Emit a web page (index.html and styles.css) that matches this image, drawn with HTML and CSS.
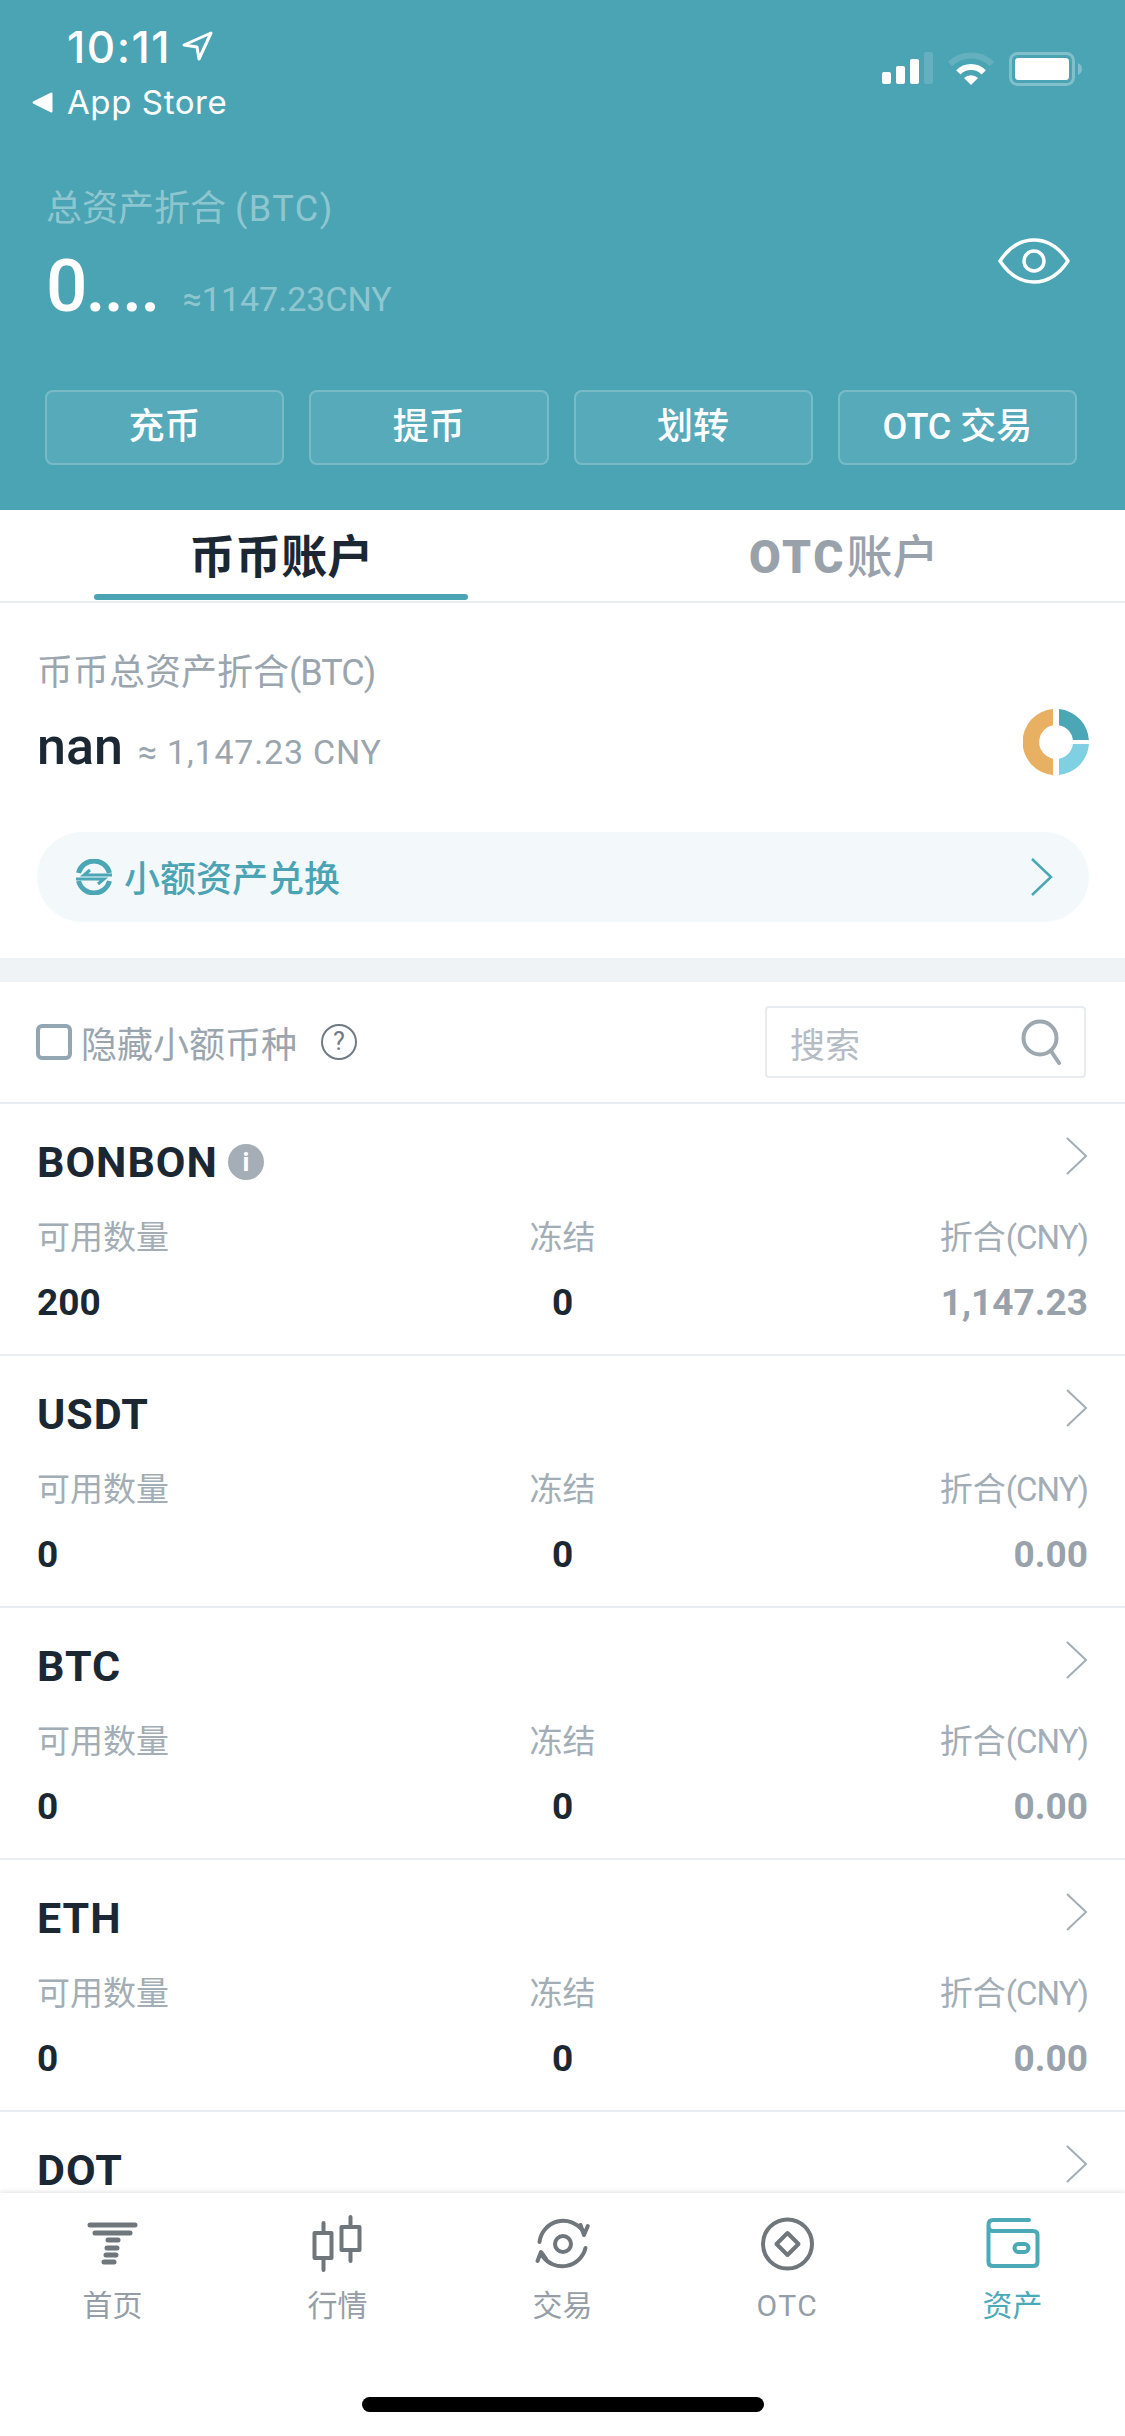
FILE: index.html
```html
<!DOCTYPE html>
<html lang="zh-CN">
<head>
	<meta charset="utf-8" />
	<title>资产</title>
	<link rel="stylesheet" href="styles.css">
</head>
<body>
<div class="phone">
	<header class="top">
		<div class="status">
			<div class="status-left">
				<div class="time-row">
					<span class="time">10:11</span>
					<svg class="loc" width="32" height="32" viewBox="0 0 32 32"><path d="M29 2 L2 14 L15 16 L17 28 Z" fill="none" stroke="#fff" stroke-width="3" stroke-linejoin="round"/></svg>
				</div>
				<div class="back-row">
					<svg class="back" width="21" height="21" viewBox="0 0 21 21"><path d="M19.5 1.5 V19.5 L1.5 10.5 Z" fill="#fff" stroke="#fff" stroke-width="2" stroke-linejoin="round"/></svg>
					<span class="back-text">App Store</span>
				</div>
			</div>
			<div class="status-right">
				<svg width="51" height="33" viewBox="0 0 51 33">
					<rect x="0" y="20" width="9" height="12" rx="2" fill="#fff"/>
					<rect x="14" y="14" width="9" height="18" rx="2" fill="#fff"/>
					<rect x="28" y="7" width="9" height="25" rx="2" fill="#fff"/>
					<rect x="42" y="0" width="9" height="32" rx="2" fill="#fff" opacity=".14"/>
				</svg>
				<svg width="46" height="34" viewBox="0 0 46 34" fill="none">
					<path d="M2 12 A30 30 0 0 1 44 12" stroke="#fff" stroke-width="6" opacity=".14"/>
					<path d="M10.3 20.3 A18 18 0 0 1 35.7 20.3" stroke="#fff" stroke-width="6"/>
					<path d="M23 33 L16 26 A10 10 0 0 1 30 26 Z" fill="#fff"/>
				</svg>
				<svg width="73" height="34" viewBox="0 0 73 34" fill="none">
					<rect x="1.5" y="1.5" width="63" height="31" rx="7" stroke="#fff" stroke-width="3" opacity=".3"/>
					<rect x="6" y="6" width="54" height="22" rx="3.5" fill="#fff"/>
					<path d="M69 11 Q73 13 73 17 Q73 21 69 23 Z" fill="#fff" opacity=".3"/>
				</svg>
			</div>
		</div>

		<div class="balance">
			<div>
				<div class="balance-label">总资产折合 <span class="wide">(BTC)</span></div>
				<div class="balance-value"><span class="big">0....</span><span class="approx">≈1147.23CNY</span></div>
			</div>
			<svg class="eye" width="72" height="46" viewBox="0 0 72 46" fill="none" stroke="#fff" stroke-width="3.5">
				<path d="M2 23 C12 8 24 2 36 2 C48 2 60 8 70 23 C60 38 48 44 36 44 C24 44 12 38 2 23 Z" stroke-linejoin="round"/>
				<circle cx="36" cy="23" r="10"/>
			</svg>
		</div>

		<div class="actions">
			<div class="action">充币</div>
			<div class="action">提币</div>
			<div class="action">划转</div>
			<div class="action">OTC 交易</div>
		</div>
	</header>

	<nav class="tabs">
		<div class="tab active"><span class="tab-label">币币账户</span></div>
		<div class="tab"><span class="tab-label"><b>OTC</b>账户</span></div>
	</nav>

	<section class="summary">
		<div class="summary-label">币币总资产折合<span class="tight">(BTC)</span></div>
		<div class="summary-row">
			<div class="summary-value"><span class="nan">nan</span><span class="cny">≈ 1,147.23 CNY</span></div>
			<svg width="66" height="66" viewBox="0 0 66 66">
				<path d="M30 .1 A33 33 0 0 0 30 65.9 V49.7 A17 17 0 0 1 30 16.3 Z" fill="#e8b062"/>
				<path d="M36 .1 A33 33 0 0 1 65.9 31 H49.9 A17 17 0 0 0 36 16.3 Z" fill="#4ba6b6"/>
				<path d="M65.9 35 A33 33 0 0 1 36 65.9 V49.7 A17 17 0 0 0 49.9 35 Z" fill="#7fd0e2"/>
			</svg>
		</div>
		<div class="pill">
			<svg width="36" height="36" viewBox="0 0 36 36" fill="none" stroke="#4ba6b6" stroke-width="5">
				<path d="M2.5 14 A16 16 0 0 1 33.5 14"/>
				<path d="M2.5 22 A16 16 0 0 0 33.5 22"/>
				<path d="M14 11 L8 16 H36" stroke-width="3"/>
				<path d="M0 20 H28 L22 25" stroke-width="3"/>
			</svg>
			<span class="pill-text">小额资产兑换</span>
			<svg class="pill-arrow" width="22" height="38" viewBox="0 0 22 38" fill="none" stroke="#4ba6b6" stroke-width="2.5"><path d="M1 1 L20 19 L1 37"/></svg>
		</div>
	</section>

	<div class="band"></div>

	<section class="filter">
		<span class="check"></span>
		<span class="filter-text">隐藏小额币种</span>
		<span class="help">?</span>
		<div class="search">
			<span class="search-text">搜索</span>
			<svg width="42" height="46" viewBox="0 0 42 46" fill="none" stroke="#9ea8b0" stroke-width="4"><circle cx="19" cy="19" r="16.5"/><path d="M30 32 L38 44" stroke-linecap="round"/></svg>
		</div>
	</section>

	<main class="list">
		<article class="coin">
			<div class="coin-head">
				<div class="coin-name">BONBON<span class="info">i</span></div>
				<svg class="coin-arrow" width="22" height="38" viewBox="0 0 22 38" fill="none" stroke="#a3adb5" stroke-width="2"><path d="M1 1 L20 19 L1 37"/></svg>
			</div>
			<div class="coin-grid labels"><span>可用数量</span><span>冻结</span><span>折合<i>(CNY)</i></span></div>
			<div class="coin-grid values"><span>200</span><span>0</span><span>1,147.23</span></div>
		</article>
		<article class="coin">
			<div class="coin-head">
				<div class="coin-name">USDT</div>
				<svg class="coin-arrow" width="22" height="38" viewBox="0 0 22 38" fill="none" stroke="#a3adb5" stroke-width="2"><path d="M1 1 L20 19 L1 37"/></svg>
			</div>
			<div class="coin-grid labels"><span>可用数量</span><span>冻结</span><span>折合<i>(CNY)</i></span></div>
			<div class="coin-grid values"><span>0</span><span>0</span><span>0.00</span></div>
		</article>
		<article class="coin">
			<div class="coin-head">
				<div class="coin-name">BTC</div>
				<svg class="coin-arrow" width="22" height="38" viewBox="0 0 22 38" fill="none" stroke="#a3adb5" stroke-width="2"><path d="M1 1 L20 19 L1 37"/></svg>
			</div>
			<div class="coin-grid labels"><span>可用数量</span><span>冻结</span><span>折合<i>(CNY)</i></span></div>
			<div class="coin-grid values"><span>0</span><span>0</span><span>0.00</span></div>
		</article>
		<article class="coin">
			<div class="coin-head">
				<div class="coin-name">ETH</div>
				<svg class="coin-arrow" width="22" height="38" viewBox="0 0 22 38" fill="none" stroke="#a3adb5" stroke-width="2"><path d="M1 1 L20 19 L1 37"/></svg>
			</div>
			<div class="coin-grid labels"><span>可用数量</span><span>冻结</span><span>折合<i>(CNY)</i></span></div>
			<div class="coin-grid values"><span>0</span><span>0</span><span>0.00</span></div>
		</article>
		<article class="coin">
			<div class="coin-head">
				<div class="coin-name">DOT</div>
				<svg class="coin-arrow" width="22" height="38" viewBox="0 0 22 38" fill="none" stroke="#a3adb5" stroke-width="2"><path d="M1 1 L20 19 L1 37"/></svg>
			</div>
		</article>
	</main>

	<footer class="tabbar">
		<div class="bar-items">
			<div class="bar-item">
				<svg width="60" height="60" viewBox="0 0 60 60" fill="none" stroke="#6f767c" stroke-width="5" stroke-linecap="round">
					<path d="M7 10 H52 M12 18 H47"/>
					<path d="M25 25 H35 M24 33 H34 M23 40 H33 M21 47 H31"/>
				</svg>
				<span>首页</span>
			</div>
			<div class="bar-item">
				<svg width="60" height="60" viewBox="0 0 60 60" fill="none" stroke="#6f767c" stroke-width="4" stroke-linecap="round" stroke-linejoin="round">
					<rect x="6.5" y="18" width="17" height="25"/>
					<path d="M15.5 8 V18 M15.5 43 V55"/>
					<rect x="33.5" y="12" width="18" height="23"/>
					<path d="M42.5 2 V12 M42.5 35 V46"/>
				</svg>
				<span>行情</span>
			</div>
			<div class="bar-item">
				<svg width="60" height="60" viewBox="0 0 60 60" fill="none" stroke="#6f767c" stroke-width="4" stroke-linecap="round" stroke-linejoin="round">
					<circle cx="30" cy="29" r="8"/>
					<path d="M6.5 27 A24 24 0 0 1 50 16"/>
					<path d="M47.5 10 L51 20 L54.8 11"/>
					<path d="M52.5 33 A24 24 0 0 1 9.5 41"/>
					<path d="M4.5 46 L8 37 L13 44"/>
				</svg>
				<span>交易</span>
			</div>
			<div class="bar-item">
				<svg width="60" height="60" viewBox="0 0 60 60" fill="none" stroke="#6f767c" stroke-width="4" stroke-linejoin="round">
					<circle cx="29.5" cy="29" r="24.5"/>
					<path d="M29.5 18 L40.5 29 L29.5 40 L18.5 29 Z"/>
				</svg>
				<span class="latin">OTC</span>
			</div>
			<div class="bar-item current">
				<svg width="60" height="60" viewBox="0 0 60 60" fill="none" stroke="#4ba9b8" stroke-width="4" stroke-linecap="round" stroke-linejoin="round">
					<path d="M46 5 H10 Q5.5 5 5.5 10 V47 Q5.5 51 10 51 H50 Q54.5 51 54.5 47 V20 Q54.5 16 50 16 H10 Q5.5 16 5.5 11"/>
					<rect x="31.5" y="29" width="14" height="8" rx="4"/>
				</svg>
				<span>资产</span>
			</div>
		</div>
		<div class="home-bar"></div>
	</footer>
</div>
</body>
</html>
```

FILE: styles.css
```css
* {
	box-sizing: border-box;
}

body {
	margin: 0;
	background-color: #fff;
	font-family: Roboto, "Noto Sans CJK SC", sans-serif;
}

.phone {
	width: 1125px;
	height: 2436px;
	display: flex;
	flex-direction: column;
	overflow: hidden;
	background-color: #fff;
}

.tight {
	letter-spacing: -1px;
}

.wide {
	letter-spacing: 1.5px;
}

/* teal header */
.top {
	flex: none;
	height: 510px;
	background-color: #4ba4b4;
	color: #fff;
}

.status {
	display: flex;
	justify-content: space-between;
	height: 130px;
	padding: 25px 43px 0 32px;
}

.time-row,
.back-row {
	display: flex;
	align-items: center;
	height: 44px;
}

.time-row {
	padding-left: 35px;
}

.time {
	font-family: Inter, sans-serif;
	font-size: 44px;
	font-weight: 500;
	letter-spacing: 1.5px;
	line-height: 44px;
}

.loc {
	margin-left: 11px;
}

.back-row {
	margin-top: 11px;
}

.back-text {
	margin-left: 14px;
	font-family: Inter, sans-serif;
	font-size: 33px;
	letter-spacing: 0.6px;
}

.status-right {
	display: flex;
	gap: 15px;
	align-items: flex-start;
	padding-top: 27px;
}

.balance {
	display: flex;
	justify-content: space-between;
	align-items: center;
	padding: 54px 55px 0 46px;
}

.balance-label {
	height: 50px;
	line-height: 50px;
	font-size: 36px;
	color: rgba(255, 255, 255, 0.4);
}

.balance-value {
	display: flex;
	align-items: baseline;
	height: 80px;
	line-height: 80px;
	margin-top: 12px;
}

.big {
	font-size: 73px;
	font-weight: 500;
	letter-spacing: -2px;
}

.approx {
	margin-left: 24px;
	font-size: 34px;
	color: rgba(255, 255, 255, 0.4);
}

.eye {
	margin-top: 11px;
}

.actions {
	display: flex;
	gap: 25px;
	margin-top: 64px;
	padding: 0 48px 0 45px;
}

.action {
	flex: 1;
	height: 75px;
	line-height: 71px;
	text-align: center;
	font-size: 36px;
	font-weight: 500;
	background-color: rgba(255, 255, 255, 0.07);
	border: 2px solid rgba(255, 255, 255, 0.2);
	border-radius: 8px;
}

/* account tabs */
.tabs {
	flex: none;
	display: flex;
	height: 93px;
	border-bottom: 2px solid #e8edf1;
}

.tab {
	flex: 1;
	display: flex;
	flex-direction: column;
	align-items: center;
	padding-top: 16px;
}

.tab-label {
	height: 62px;
	line-height: 62px;
	font-size: 46px;
	font-weight: 500;
	color: #99a2ab;
}

.tab-label b {
	font-weight: 900;
	letter-spacing: 3px;
}

.tab.active .tab-label {
	color: #1b2833;
	font-weight: 700;
}

.tab.active::after {
	content: "";
	width: 374px;
	height: 6px;
	margin-top: 6px;
	background-color: #4ba4b4;
	border-radius: 3px;
}

/* summary */
.summary {
	flex: none;
	padding: 45px 36px 36px 37px;
}

.summary-label {
	height: 50px;
	line-height: 50px;
	font-size: 36px;
	color: #9aa5ae;
}

.summary-row {
	display: flex;
	justify-content: space-between;
	align-items: center;
	height: 66px;
	margin-top: 11px;
}

.summary-value {
	display: flex;
	align-items: baseline;
	margin-top: 8px;
}

.nan {
	font-size: 52px;
	font-weight: 500;
	color: #1b2833;
}

.cny {
	margin-left: 15px;
	font-size: 34px;
	letter-spacing: 0.8px;
	color: #9aa5ae;
}

.pill {
	display: flex;
	align-items: center;
	height: 90px;
	margin-top: 57px;
	padding: 0 36px 0 39px;
	background-color: #f3f9fb;
	border-radius: 45px;
}

.pill-text {
	flex: 1;
	margin-left: 12px;
	padding-bottom: 2px;
	font-size: 36px;
	font-weight: 500;
	color: #4ba4b4;
}

.band {
	flex: none;
	height: 24px;
	background-color: #eff3f6;
}

/* filter row */
.filter {
	flex: none;
	display: flex;
	align-items: center;
	height: 120px;
	padding: 0 39px 0 36px;
}

.check {
	width: 36px;
	height: 36px;
	border: 4px solid #93a6b4;
	border-radius: 6px;
}

.filter-text {
	margin-left: 9px;
	font-size: 36px;
	color: #9aa5ae;
}

.help {
	width: 36px;
	height: 36px;
	margin-left: 24px;
	line-height: 31px;
	text-align: center;
	font-size: 25px;
	color: #6f7a84;
	border: 2.5px solid #6f7a84;
	border-radius: 50%;
}

.search {
	display: flex;
	justify-content: space-between;
	align-items: center;
	width: 321px;
	height: 72px;
	margin-left: auto;
	padding: 0 21px 0 23px;
	border: 2px solid #e8ecf0;
	border-radius: 4px;
}

.search-text {
	font-size: 35px;
	color: #b5bcc3;
}

/* coin list */
.list {
	flex: 1;
}

.coin {
	height: 252px;
	padding: 28px 37px 0;
	border-top: 2px solid #e8edf1;
}

/* the last row only shows its head above the tab bar */
.coin:last-child {
	height: 83px;
}

.coin-head {
	display: flex;
	justify-content: space-between;
	height: 60px;
}

.coin-name {
	display: flex;
	align-items: center;
	font-size: 43px;
	font-weight: 700;
	letter-spacing: 1px;
	line-height: 40px;
	color: #1b2833;
}

.info {
	width: 36px;
	height: 36px;
	margin-left: 10px;
	line-height: 36px;
	text-align: center;
	font-size: 26px;
	letter-spacing: 0;
	color: #fff;
	background-color: #a5aeb6;
	border-radius: 50%;
}

.coin-arrow {
	margin-top: 5px;
}

.coin-grid {
	display: grid;
	grid-template-columns: 1fr 1fr 1fr;
}

.coin-grid span:nth-child(2) {
	text-align: center;
}

.coin-grid span:nth-child(3) {
	text-align: right;
}

.labels {
	height: 44px;
	margin-top: 24px;
	line-height: 44px;
	font-size: 33px;
	color: #a3adb5;
}

.labels i {
	font-style: normal;
	letter-spacing: -1px;
}

.values {
	height: 44px;
	margin-top: 21px;
	line-height: 44px;
	font-size: 37px;
	font-weight: 700;
	color: #1b2833;
}

.values span:nth-child(3) {
	color: #99a2ab;
}

/* bottom tab bar */
.tabbar {
	flex: none;
	height: 243px;
	background-color: #fff;
	box-shadow: 0 -1px 5px rgba(0, 0, 0, 0.12);
}

.bar-items {
	display: flex;
	padding-top: 22px;
}

.bar-item {
	flex: 1;
	display: flex;
	flex-direction: column;
	align-items: center;
	font-size: 30px;
	line-height: 40px;
	color: #959ea6;
}

.bar-item span {
	margin-top: 11px;
}

.bar-item .latin {
	letter-spacing: 1.5px;
}

.bar-item.current {
	color: #4ba9b8;
}

.home-bar {
	width: 402px;
	height: 15px;
	margin: 71px auto 0;
	background-color: #000;
	border-radius: 8px;
}
```
